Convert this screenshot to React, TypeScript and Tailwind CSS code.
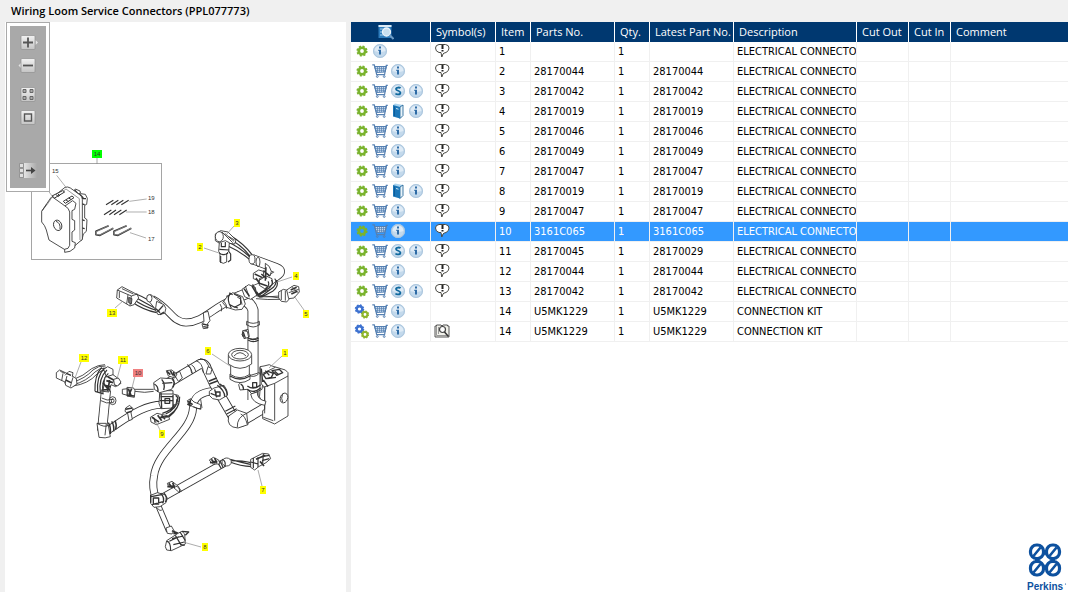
import React, { useState } from "react";

type IconName = "gear" | "gears" | "cart" | "info" | "super" | "book";

type Part = {
  item: string;
  partNo: string;
  latest: string;
  description: string;
  icons: IconName[];
  symbol: "note" | "manual" | null;
};

const CONNECTOR = "ELECTRICAL CONNECTO";

const parts: Part[] = [
  { item: "1", partNo: "", latest: "", description: CONNECTOR, icons: ["gear", "info"], symbol: "note" },
  { item: "2", partNo: "28170044", latest: "28170044", description: CONNECTOR, icons: ["gear", "cart", "info"], symbol: "note" },
  { item: "3", partNo: "28170042", latest: "28170042", description: CONNECTOR, icons: ["gear", "cart", "super", "info"], symbol: "note" },
  { item: "4", partNo: "28170019", latest: "28170019", description: CONNECTOR, icons: ["gear", "cart", "book", "info"], symbol: "note" },
  { item: "5", partNo: "28170046", latest: "28170046", description: CONNECTOR, icons: ["gear", "cart", "info"], symbol: "note" },
  { item: "6", partNo: "28170049", latest: "28170049", description: CONNECTOR, icons: ["gear", "cart", "info"], symbol: "note" },
  { item: "7", partNo: "28170047", latest: "28170047", description: CONNECTOR, icons: ["gear", "cart", "info"], symbol: "note" },
  { item: "8", partNo: "28170019", latest: "28170019", description: CONNECTOR, icons: ["gear", "cart", "book", "info"], symbol: "note" },
  { item: "9", partNo: "28170047", latest: "28170047", description: CONNECTOR, icons: ["gear", "cart", "info"], symbol: "note" },
  { item: "10", partNo: "3161C065", latest: "3161C065", description: CONNECTOR, icons: ["gear", "cart", "info"], symbol: "note" },
  { item: "11", partNo: "28170045", latest: "28170029", description: CONNECTOR, icons: ["gear", "cart", "super", "info"], symbol: "note" },
  { item: "12", partNo: "28170044", latest: "28170044", description: CONNECTOR, icons: ["gear", "cart", "info"], symbol: "note" },
  { item: "13", partNo: "28170042", latest: "28170042", description: CONNECTOR, icons: ["gear", "cart", "super", "info"], symbol: "note" },
  { item: "14", partNo: "U5MK1229", latest: "U5MK1229", description: "CONNECTION KIT", icons: ["gears", "cart", "info"], symbol: null },
  { item: "14", partNo: "U5MK1229", latest: "U5MK1229", description: "CONNECTION KIT", icons: ["gears", "cart", "info"], symbol: "manual" },
];

const iconLabels: Record<IconName, string> = {
  gear: "Part",
  gears: "Kit",
  cart: "Add to cart",
  info: "Information",
  super: "Supersession",
  book: "Service document",
};

const Gear = ({ cx, cy, r, color }: { cx: number; cy: number; r: number; color: string }) => (
  <g>
    <circle cx={cx} cy={cy} r={r * 0.6} fill="none" stroke={color} strokeWidth={r * 0.5} />
    <circle
      cx={cx}
      cy={cy}
      r={r * 0.88}
      fill="none"
      stroke={color}
      strokeWidth={r * 0.3}
      strokeDasharray={`${r * 0.38} ${r * 0.311}`}
    />
  </g>
);

const Disc = ({ children }: { children: React.ReactNode }) => (
  <g>
    <circle cx="8" cy="8" r="7" fill="#c3d9ec" />
    <circle cx="8" cy="8" r="6.400" fill="none" stroke="#a9c4dc" />
    <path d="M2.500 8a5.500 5.500 0 0 1 11 0q-5.500 2-11 0" fill="#dfebf6" />
    {children}
  </g>
);

const RowIcon = ({ name }: { name: IconName }) => (
  <svg viewBox="0 0 16 16" className="w-4 h-4">
    {name === "gear" && <Gear cx={8} cy={8} r={5.4} color="#7ab32e" />}
    {name === "gears" && (
      <>
        <Gear cx={5.5} cy={6} r={4.6} color="#3e72d0" />
        <Gear cx={11} cy={11.5} r={4} color="#8fb52a" />
      </>
    )}
    {name === "cart" && (
      <g fill="none" stroke="#5580b2">
        <path d="M2.500 3.500h12l-1.500 5.500-8.500.5z" fill="#d3e2f2" />
        <path d="M.3 1.800h2L4.800 12M15.800 2.300h-1.500L12.500 12M4.500 11.700h8.500" strokeWidth="1.200" />
        <path d="M3 5.400h11M3.500 7.300h10M5.500 3.500v5.500M7.500 3.500v5.500M9.500 3.500v5.500M11.500 3.500v5.500" strokeWidth=".7" />
        <circle cx="5.300" cy="13.500" r=".9" />
        <circle cx="12.200" cy="13.500" r=".9" />
      </g>
    )}
    {name === "info" && (
      <Disc>
        <path d="M7 3.600h2v1.800H7zM6.300 6.800H9v4.600H7V8h-.7z" fill="#2f6ca6" />
      </Disc>
    )}
    {name === "super" && (
      <Disc>
        <path
          d="M10.500 5.300C9.800 4.300 6 4 6 6c0 2 4.400 1.500 4.400 3.700 0 2.300-4 2-4.900.8"
          fill="none"
          stroke="#11699e"
          strokeWidth="1.800"
        />
      </Disc>
    )}
    {name === "book" && (
      <g>
        <path d="M3 2 5 .5l8 1.500v10.500l-2.500 2.500z" fill="#a9d3ee" />
        <path d="M10 4 13 2v10.500L10 15.500z" fill="#e8f3fa" stroke="#155a90" strokeWidth=".8" />
        <path d="M3 2 10 4v11.500L3 13.500z" fill="#1c77b8" />
        <path d="M4.500 3.500v9.500" stroke="#0d5690" strokeWidth=".8" />
        <path d="M6 5.500l2.500.7" stroke="#cfe8f7" />
      </g>
    )}
  </svg>
);

const SymbolIcon = ({ name }: { name: "note" | "manual" }) =>
  name === "note" ? (
    <svg viewBox="0 0 16 16" className="w-4 h-4">
      <path
        d="M5 1.500h6.500Q15 2 15 5q0 3-3 4.500-2.500.5-3 1.500L7.800 14 7 9.500H5Q1.500 8.500 1.500 5 1.500 2 5 1.500z"
        fill="#fff"
        stroke="#4a4a44"
        strokeLinejoin="round"
      />
      <path d="M8.500 2v4M8.500 7v1.500" stroke="#222" strokeWidth="2" />
    </svg>
  ) : (
    <svg viewBox="0 0 16 16" className="w-4 h-4">
      <path d="M1 3h1.500V2H7l1 1 1-1h4.500v1H15v11H1z" fill="#f1f1ea" stroke="#555" />
      <path d="M2.500 3v9.500H14M4.500 4v7" stroke="#999" fill="none" />
      <circle cx="8.500" cy="6.500" r="3" fill="#fff" stroke="#444" strokeWidth="1.200" />
      <path d="m10.500 9 4 4.500" stroke="#333" strokeWidth="1.500" />
    </svg>
  );

const tools = [
  { name: "Zoom in", css: "mt-[9px]" },
  { name: "Zoom out", css: "mt-2" },
  { name: "Fit to window", css: "mt-[14px]" },
  { name: "Actual size", css: "mt-2" },
  { name: "Show list", css: "mt-[38px]" },
];

const ToolIcon = ({ name }: { name: string }) => (
  <svg viewBox="0 0 20 15" className="w-5 h-[15px]">
    <defs>
      <linearGradient id="tool" x1="0" y1="0" x2="0" y2="1">
        <stop offset="0" stopColor="#f2f2f2" />
        <stop offset="1" stopColor="#c4c4c4" />
      </linearGradient>
      <linearGradient id="fade">
        <stop offset="0" stopColor="#e4e4e4" />
        <stop offset="1" stopColor="#a9a9a9" />
      </linearGradient>
    </defs>
    {name === "Show list" ? (
      <g>
        <path d="M6 0h13v15H6z" fill="url(#fade)" />
        <path d="M1.500.5h4v4h-4zM1.500 5.500h4v4h-4zM1.500 10.500h4v4h-4z" fill="#e0e0e0" stroke="#888" strokeWidth=".8" />
        <path d="M8 7.500h6" stroke="#444" strokeWidth="1.600" />
        <path d="m13 4 4.500 3.500L13 11z" fill="#444" />
      </g>
    ) : (
      <g>
        {name === "Zoom in" && <path d="m17.500 5 2.500 2.500-2.500 2.500z" fill="#e4e4e4" />}
        {name === "Zoom out" && <path d="M3 5 .5 7.500 3 10z" fill="#e4e4e4" />}
        <rect x="3" y=".5" width="14" height="14" rx="1" fill="url(#tool)" stroke="#8f8f8f" strokeWidth=".7" />
      </g>
    )}
    {name === "Zoom in" && <path d="M5 7.500h10m-5-5v10" stroke="#555" strokeWidth="1.800" />}
    {name === "Zoom out" && <path d="M5 7.500h10" stroke="#555" strokeWidth="1.800" />}
    {name === "Fit to window" && (
      <path
        d="M5 2.500h3v3H5zM12 2.500h3v3h-3zM5 9.500h3v3H5zM12 9.500h3v3h-3z"
        fill="#aaa"
        stroke="#666"
      />
    )}
    {name === "Actual size" && <rect x="6.500" y="4" width="7" height="7" fill="none" stroke="#555" strokeWidth="1.400" />}
  </svg>
);

// hollow tube: dark stroke with a white one on top
const Pipe = ({ d, w }: { d: string; w: number }) => (
  <g fill="none" strokeLinejoin="round">
    <path d={d} stroke="#333" strokeWidth={w} />
    <path d={d} stroke="#fff" strokeWidth={w - 1.7} />
  </g>
);

const labels = [
  { n: "3", x: 237, y: 223, line: "M234 226 226 235" },
  { n: "2", x: 200, y: 247, line: "M204 248 219 253" },
  { n: "4", x: 296, y: 276, line: "M292 277 277 282" },
  { n: "5", x: 306, y: 314, line: "M304 310 294 296" },
  { n: "13", x: 112, y: 313, line: "M115 308 123 301" },
  { n: "6", x: 208, y: 351, line: "M212 354 230 366" },
  { n: "1", x: 285, y: 353, line: "M282 356 269 368" },
  { n: "12", x: 84, y: 358, line: "M81 362 75 378" },
  { n: "11", x: 123, y: 360, line: "M121 364 117 379" },
  { n: "10", x: 138, y: 373, line: "M135 376 132 388", fill: "#f08080" },
  { n: "9", x: 162, y: 434, line: "M160 430 155 420" },
  { n: "7", x: 263, y: 490, line: "M262 486 258 470" },
  { n: "8", x: 205, y: 547, line: "M201 547 183 542" },
  { n: "14", x: 97, y: 154, line: "M97 158V164", fill: "#00ff00" },
];

const LoomDrawing = () => (
  <svg
    viewBox="5 22 341 570"
    className="w-full"
    role="img"
    aria-label="Wiring loom exploded view"
    fontFamily='"Liberation Sans", Arial, sans-serif'
  >
    <rect x="31.500" y="163.500" width="130" height="96" fill="none" stroke="#a5a5a5" />

    {/* connector housing and pins */}
    <g transform="translate(30 140) scale(.33333)" fill="#fff" stroke="#333" strokeWidth="2.600" strokeLinejoin="round">
      <path d="M128 157l8-10 14 6 2 8 14 2 6 12-2 18-6 3v38l7 5-2 35-9 8-4 18-14 6z" />
      <path d="M134 150l12 14M146 160l14 14M150 176h18M150 190l14 4M146 236l18 6M148 262l16 4" strokeWidth="4" />
      <path d="M68 172 105 142q8-3 16 2l28 20q8 6 8 14v120l-28 24-20-10z" />
      <path d="M78 170 108 147 148 176 150 300" fill="none" strokeWidth="1.500" />
      <path d="M105 198 128 182 138 190 134 208l-8 4v26l8 4v28l-8 6v28l10 4-2 16-14 10-16 3z" />
      <path d="M62 174 35 214v32q10 10 14 24l8 30 46 28q14 0 16-12V216q-2-12-14-18L66 170z" />
      <path d="M50 192 35 214M66 172 54 190 38 210" fill="none" strokeWidth="1.500" />
      <path d="M66 168 98 152l6 4-30 18zM100 184l26-16 6 5-26 17zM84 162l6 6M78 164l8 6M108 180l8 5M116 174l8 5" strokeWidth="3" />
      <ellipse cx="83" cy="256" rx="12" ry="16" transform="rotate(-20 83 256)" />
      <path d="M78 244q14 4 12 24" fill="none" />
      <path
        d="M228 194 250 181M244 194 265 181M259 194 280 181M274 194 296 181M222 224 244 210M238 224 258 210M252 224 274 210M268 224 290 210"
        strokeWidth="3.500"
      />
      <path
        d="M236 257 198 274v10l12 2 40-21M290 257 252 274v10l12 2 40-21"
        fill="none"
        strokeWidth="5"
      />
      <path d="M236 257 199 275v8l11 2 40-21M290 257 253 275v8l11 2 40-21" fill="none" stroke="#ccc" strokeWidth="1.500" />
      <path d="M80 106 108 142M46 140 66 168M298 184 350 177M288 216H350M300 278 348 294" stroke="#888" strokeWidth="2" />
    </g>
    <g fontSize="6" fill="#333">
      <text x="52" y="173">15</text>
      <text x="148" y="200">19</text>
      <text x="148" y="214">18</text>
      <text x="148" y="241">17</text>
    </g>

    {/* tubes */}
    <Pipe d="M214 391C200 392 193 398 193 408 192 432 157 450 154 476 152 486 154 492 156 500" w={8} />
    <Pipe d="M160 499 224 463" w={8} />
    <Pipe d="M158 505 169 531" w={6} />
    <Pipe d="M106 390 102 431" w={10} />
    <Pipe d="M108 430C124 420 144 403 165 405" w={8} />
    <Pipe d="M163 386 200 364Q205 363 207 369L214 384 232 415Q237 427 246 419L268 406" w={10} />
    <Pipe d="M253 400V320 310Q250 300 236 297" w={11} />
    <Pipe d="M152 299C170 308 172 322 186 322.500 204 322 212 308 232 300" w={8} />
    <Pipe d="M252 259 276 268Q284 271 276 276L266 283" w={10} />
    <Pipe d="M228 301 268 285" w={11} />

    {/* upper loom: connectors 2, 3, 4, 5 and 13 */}
    <g transform="translate(100 210) scale(.33333)" fill="#fff" stroke="#333" strokeWidth="2.600" strokeLinejoin="round">
      <path d="M380 84Q420 100 450 138M384 96Q420 112 450 142M384 108Q420 124 448 148M390 76Q430 100 456 134" fill="none" strokeWidth="3.500" />
      <path d="M346 72l16-10 22 4 24 24-4 12-16-2-20 6-22-14z" />
      <ellipse cx="358" cy="80" rx="12" ry="15" />
      <path d="M366 66 398 98M374 70 402 94M386 80 404 90" />
      <path d="M358 98 376 92l12 6-2 26-6 6v26q-10 8-20 0v-26l-4-6z" />
      <path d="M358 130q12 8 26 0M364 98v12h12V96M362 138v20M386 124l6 8v18l-8 6M358 118l30 2" fill="none" strokeWidth="3.500" />
      <ellipse cx="456" cy="148" rx="9" ry="14" />
      <ellipse cx="474" cy="156" rx="6" ry="14" fill="none" />
      <path d="M496 160q14 6 18 24l-4 14-14-8z" />
      <path d="M460 190l16-10 14 4 2 18-16 10-16-6zM478 206l20-8 18 8 2 18-24 12-16-10z" />
      <path d="M464 192 486 202M490 182l20 16M498 172l-2 40M468 204l10 16 24 8M484 192l16 14" fill="none" strokeWidth="4.500" />
      <path d="M524 206q10 10-4 26l-40 30M514 210q8 8-4 22l-36 26M530 210q8 18-12 34l-34 18M504 214q8 10-10 26l-26 18" fill="none" strokeWidth="3.500" />
      <path d="M426 238l20-14 20 8 4 24-18 12-18-8zM436 228l12 34M458 222l14 30" />
      <path d="M432 236 448 258M456 228l14 24M470 246l10 16" strokeWidth="4.500" />
      <path d="M468 266Q500 270 546 268M472 260Q500 262 540 258M480 256 540 264" fill="none" />
      <path d="M536 246l14-8 16 4 6 20-12 14-16-2-8-10z" />
      <path d="M560 240l22-14 14 4 2 16-16 18-16 2zM576 230l18 18M566 248l30-10M544 242v28M556 242v30" />
      <path d="M572 240 590 232M574 252 592 244" strokeWidth="5" />
      <path d="M380 262 398 248l30 12 8 22-10 16-20 2-26-8-12-14z" />
      <path d="M390 250q-12 20 4 44M402 252l20 10v20l-18 10-14-8M388 248l10 6M400 290l14 4" fill="none" strokeWidth="3.500" />
      <path d="M360 282q8 10 4 22M372 274q10 12 8 22M412 262q12 2 14 22" fill="none" />
      <path d="M440 334q20 12 38 0M440 344q20 14 38 0M440 334v12M478 334v12M442 382q16 10 32 0" fill="none" />
      <path d="M430 362l14-4 4 22-14 4-8-10z" />
      <path d="M430 364l-2 16M438 360v22" strokeWidth="4" />
      <path d="M310 308l14-4 6 28-8 10 2 12-14 2-4-14 6-8z" />
      <path d="M308 342l18 4M310 350l14 2" strokeWidth="4" />
      {/* 13 */}
      <path d="M100 258Q130 276 176 300M100 268Q130 290 172 302M96 276Q130 300 170 308M108 252Q140 264 180 294" fill="none" strokeWidth="3.500" />
      <path d="M52 240 66 230l46 24 4 10-14 20-12 4-40-24z" />
      <path d="M52 240 94 258l18-6M94 258l-4 28M84 254l-4 28M66 236l34 16M58 244v20" fill="none" />
      <path d="M86 262l10 4-2 16-8-4z" fill="#777" />
      <path d="M144 256q10-6 16 4l24 18-14 24-28-34z" />
      <ellipse cx="148" cy="265" rx="8" ry="11" />
      <path d="M170 274l22 10q10 10 2 26l-20 4-8-14z" />
      <path d="M172 306l18-20M180 314l12-8M168 296l12 12" strokeWidth="4" />
    </g>

    {/* left loom: connectors 9 to 12 */}
    <g transform="translate(45 330) scale(.33333)" fill="#fff" stroke="#333" strokeWidth="2.600" strokeLinejoin="round">
      <path d="M84 156Q120 146 144 120 160 106 182 108M86 164Q124 154 150 126 164 112 184 114M84 168Q130 162 156 132 170 118 186 120M82 150Q116 138 140 116 160 104 180 104" fill="none" />
      <path d="M34 128l10-8 38 18 12 8 2 16-18 12-16-8-2-10-26-12z" />
      <path d="M60 136l12-12 12 4-2 12M54 130l-4 22M66 138l-6 22M84 142l-8 28M46 124l14 6" />
      <path d="M64 130l14 6M62 150l16 8" strokeWidth="4.500" />
      <path d="M176 118l12-8 16 8v20l-20 2z" />
      <path d="M170 112Q148 136 150 184M178 114Q154 140 158 186M186 120Q160 144 166 190M190 130Q168 150 174 192M150 184l26 8" fill="none" strokeWidth="3.500" />
      <path d="M180 142l24-8 16 12 8 14-16 10-14-6-6 22-18-2z" />
      <path d="M184 152l20 6M188 140l18 10M178 166l20 4M172 180l24-2M194 150l-6 34M206 148l6 20M174 158l14 18" strokeWidth="5" />
      <path d="M206 148l14-4 8 12-10 12-10-4z" />
      <ellipse cx="203" cy="212" rx="10" ry="12" />
      <ellipse cx="203" cy="212" rx="4" ry="6" />
      <path d="M170 204q16 10 34 4M168 212q16 10 34 6" fill="none" />
      <path d="M156 280q24 14 34 6l6 34q-14 6-34 2z" />
      <path d="M156 280h28l-4 36" fill="none" />
      <path d="M190 278q8 12 6 34M200 274q8 12 6 30M210 272q6 12 2 26" fill="none" strokeWidth="4.500" />
      <path d="M242 234l12-8 10 10-6 12 4 20-10 4-4-22-8-6z" />
      <path d="M242 238l20-4M246 248l14-4" strokeWidth="4.500" />
      {/* 10 */}
      <path d="M270 178H326M270 184Q300 190 326 184" fill="none" />
      <path d="M232 178l16-2v20l-16-4zM246 172l20 2 4 8-2 20-22-4z" />
      <path d="M250 176l8 20M252 194l8-18M246 196l22 2" strokeWidth="5" />
      {/* tee */}
      <path d="M344 182h40v24h-40z" />
      <path d="M326 158l20-14 34 2 8 12-8 20-36 10-16-10z" />
      <path d="M328 162q14 8 10 24M350 148q12 14 6 32M382 144q10 14 2 28M352 160l30-2" fill="none" strokeWidth="4" />
      <path d="M364 122l16-2 16 12-6 12-20-6z" />
      <path d="M366 124l10 10M376 122l8 14M386 126l2 14" strokeWidth="5" />
      <path d="M344 192h40l16 4 4 14-16 24-40 2-6-16z" />
      <path d="M346 200h38M344 212h40M384 194v36M392 196q12 8 2 22M348 188l2 46M360 206h14v14h-14z" fill="none" strokeWidth="4" />
      <path d="M404 200Q406 234 370 258M396 206Q396 236 362 252M388 222Q384 240 352 250M402 220Q392 250 360 268" fill="none" strokeWidth="3.500" />
      <path d="M316 262l20-12 34 8 4 10-40 16-16-8z" />
      <path d="M326 266l16 10M338 256l12 16M350 256l10 12M320 262q12 2 10 16M346 262l24-2" strokeWidth="5" />
      <path d="M388 134l16-10 8 20-12 10zM426 104q10 0 14 26" fill="none" />
    </g>

    {/* filter, elbow and control box: 1 and 6 */}
    <g transform="translate(180 330) scale(.33333)" fill="#fff" stroke="#333" strokeWidth="2.600" strokeLinejoin="round">
      <path d="M24 108q10 4 14 24M34 104q10 4 14 22M60 86q22 0 30 36M48 92q20 6 22 36" fill="none" />
      <path d="M84 110l12 6-4 16-14 0z" />
      <path d="M86 154l24-10M88 162l26-10" strokeWidth="5" />
      <path d="M88 184l14-10 30-8 8 14 2 16-24 14-20-4-10-10z" />
      <path d="M92 190l20 8M104 178l6 24M120 162q22 14 22 34M112 166q22 16 22 34M108 186h12v12h-12z" fill="none" strokeWidth="4" />
      <path d="M136 244l30-16M140 252l30-16M144 260l30-16" strokeWidth="3.500" />
      <path d="M146 258q-8 34 28 36l30-10-4-34-28-10z" />
      <path d="M172 292q-2-30 28-42M182 252q14 6 20 32" fill="none" />
      <path d="M22 212l10-6 10 10 20 8 0 14-24-8-12-8z" />
      <path d="M24 214l14 10M32 208l-4 18M22 222l12 6" strokeWidth="5" />
      <path d="M40 230q12 8 24 6M62 208l4 26" fill="none" />
      {/* vertical tube fittings */}
      <path d="M188 2l14 2 4 18-14 4z" />
      <path d="M190 6l6 18M204 24q16 10 32 0M204 30q16 10 32 0" fill="none" strokeWidth="3.500" />
      <path d="M198 140l40-12 12 20-4 30-30 14-14-14-22 2-4-16z" />
      <path d="M182 162q10 6 8 18M202 168q20 14 40-4M202 178q18 14 40-4M218 158h12v14h-12z" fill="none" strokeWidth="4" />
      <path d="M206 136q16 8 30-4" fill="none" />
      {/* control box */}
      <path d="M240 110l12-2 16-4 8 4 40 12 8 8v130l-40 24-36-16 0-24 6-4V172l-10-10z" />
      <path d="M250 172l34-12 40-22M284 160V272M254 172V250M248 130 286 112M250 262l30 10M240 112v70q-6 20 6 34" fill="none" />
      <path d="M250 134l14-10 16 6-6 12-16 4zM276 122l22-4 10 10-18 8zM262 146l26-4M244 116l4 40M256 122l12 14M284 124l12 10M250 150l14 20" strokeWidth="4" />
      <ellipse cx="312" cy="204" rx="11" ry="15" transform="rotate(20 312 204)" />
      <path d="M308 192q-6 14 0 24" fill="none" />
      <path d="M212 192q4 28 42 34l4-12q-28-6-26-28z" />
      {/* filter */}
      <path d="M150 132v16q30 20 60 0v-16z" />
      <path d="M150 138q30 18 60 0" fill="none" strokeWidth="4" />
      <path d="M152 104v30q28 18 56 0v-30z" />
      <path d="M145 76v26q35 26 70 0V76z" />
      <ellipse cx="180" cy="74" rx="35" ry="19" />
      <ellipse cx="180" cy="74" rx="25" ry="13" />
      <path d="M162 78q18-20 36 0" fill="none" />
    </g>

    {/* lower loom: connectors 7 and 8 */}
    <g transform="translate(130 430) scale(.33333)" fill="#fff" stroke="#333" strokeWidth="2.600" strokeLinejoin="round">
      <path d="M300 88Q330 96 364 104M300 96Q330 108 366 110M304 92Q340 92 362 98" fill="none" strokeWidth="3.500" />
      <path d="M362 88l16-8 20-10 18 2 6 14-14 12-22 12-12 10-12-8z" />
      <path d="M370 84v30M384 82v30M362 96l22 6M394 80l24-4M396 92l22-6M400 72l-2 28" strokeWidth="3.500" />
      <path d="M390 94l12 14M378 88l28-12" strokeWidth="5" />
      <ellipse cx="290" cy="96" rx="14" ry="12" />
      <path d="M270 92l10 22M262 96l12 20M276 88q14 6 8 22" fill="none" strokeWidth="3.500" />
      <path d="M238 90l12-8 16 8 4 12-22 0z" />
      <path d="M244 88l10 12M254 84l6 16M240 98l22-4" strokeWidth="5" />
      <path d="M112 160l14-6 18 14 10 16-8 2-16-14-14-2z" />
      <path d="M116 160l12 14M128 158l6 16M112 170l22-2" strokeWidth="5" />
      <path d="M134 168q18 2 14 20" fill="none" />
      <path d="M62 196l20-8 22 6 8 10-4 14-18 12-18 2-10-12z" />
      <path d="M64 200l30-6M66 224l36-10M92 190q14 14 6 30M102 190q12 12 4 26M70 204h16v18h-16zM62 194v24" fill="none" strokeWidth="4" />
      <path d="M82 234q8 12 16 4" />
      <path d="M108 294l16-6 8 14-6 10-14-2z" />
      <path d="M126 302l18 8M130 310l20 2" strokeWidth="5" />
      <path d="M110 332l34-22 12-6 8 8 2 30-12 6-30 14-14-2-4-10z" />
      <path d="M110 334q12 0 12 28M126 326l34-8M130 344l34-8M136 316l18 30M150 306l16 26M118 334l28-14" fill="none" strokeWidth="3.500" />
      <path d="M156 304l20 2-10 10M152 344l12 2" fill="none" strokeWidth="4" />
    </g>

    {labels.map(({ n, x, y, line, fill }) => (
      <g key={n}>
        <path d={line} stroke="#888" strokeWidth=".7" />
        <rect
          x={n.length > 1 ? x - 5 : x - 3}
          y={y - 4}
          width={n.length > 1 ? 10 : 6}
          height="8"
          fill={fill ?? "#ffff00"}
        />
        <text x={x} y={y + 2} fontSize="6" textAnchor="middle" fill="#333">
          {n}
        </text>
      </g>
    ))}
  </svg>
);

const PerkinsLogo = () => (
  <svg viewBox="0 0 41 50" className="w-[41px] h-[50px]" role="img" aria-label="Perkins">
    <g fill="none" stroke="#0d519f" strokeWidth="3.200">
      <rect x="3.500" y="3" width="13" height="13.500" rx="6" />
      <rect x="19.500" y="3" width="13" height="13.500" rx="6" />
      <rect x="3.500" y="19.500" width="13" height="13.500" rx="6" />
      <rect x="19.500" y="19.500" width="13" height="13.500" rx="6" />
      <path d="M6.500 14 13.500 5.500M22.500 14 29.500 5.500M6.500 30.500 13.500 22M22.500 30.500 29.500 22" strokeWidth="2.600" />
    </g>
    <path d="M16 8h4v3l-2 2.500-2-2.500zM16 28h4v-3l-2-2.500-2 2.500zM8 16v4h3l2.500-2-2.500-2zM28 16v4h-3l-2.500-2 2.500-2z" fill="#0d519f" />
    <text
      x="0"
      y="48"
      fontSize="10"
      fontWeight="bold"
      fontFamily='"Liberation Sans", Arial, sans-serif'
      fill="#0d519f"
    >
      Perkins
    </text>
    <circle cx="38.500" cy="42" r=".6" fill="#0d519f" />
  </svg>
);

const columns = [
  { title: "Symbol(s)", css: "w-[65px]" },
  { title: "Item", css: "w-[35px]" },
  { title: "Parts No.", css: "w-[84px]" },
  { title: "Qty.", css: "w-[35px]" },
  { title: "Latest Part No.", css: "w-[84px]" },
  { title: "Description", css: "w-[123px]" },
  { title: "Cut Out", css: "w-[52px]" },
  { title: "Cut In", css: "w-[42px]" },
  { title: "Comment", css: "" },
];

const cell = "h-5 p-0 pl-[3px] border-r border-b border-[#f0f0f0] overflow-hidden";

const App: React.FC = () => {
  const [selected, setSelected] = useState(9);

  return (
    <div className="min-h-screen flex flex-col bg-[#f0f0f0] font-['Open_Sans','Noto_Sans',sans-serif] text-[11px] leading-4 text-black">
      <h1 className="h-[22px] pl-[11px] pt-[3px] font-semibold">Wiring Loom Service Connectors (PPL077773)</h1>
      <main className="flex-1 flex gap-[5px] pl-[5px]">
        <section className="relative w-[341px] shrink-0 bg-white">
          <LoomDrawing />
          <div className="absolute left-px top-0 w-[44px] h-[170px] p-[3px] bg-white border border-[#aaa]">
            <div className="h-full bg-[#a9a9a9] flex flex-col items-center">
              {tools.map(({ name, css }) => (
                <button key={name} aria-label={name} className={`block ${css}`}>
                  <ToolIcon name={name} />
                </button>
              ))}
            </div>
          </div>
        </section>

        <section className="flex-1 min-w-0 bg-white flex flex-col">
          <table className="w-full table-fixed border-separate border-spacing-0 whitespace-nowrap text-left">
            <thead className="bg-[#003870] text-white">
              <tr>
                <th className="w-20 h-5 p-0 pl-[27px] border-r border-white">
                  <button aria-label="Search parts" className="block">
                    <svg viewBox="0 0 16 16" className="w-4 h-4">
                      <path d="M.5 1h13v13H.5z" fill="#2f7dbd" />
                      <path d="M.5 1h13v2H.5z" fill="#dbeaf6" />
                      <path d="M2 5h3M2 8h2M2 11h3" stroke="#a9d3ef" />
                      <circle cx="8.500" cy="8" r="4" fill="#c8dff0" stroke="#eef5fb" strokeWidth="1.300" />
                      <path d="m11.500 11 4 4" stroke="#6d9cc6" strokeWidth="2" />
                    </svg>
                  </button>
                </th>
                {columns.map(({ title, css }) => (
                  <th key={title} className={`h-5 p-0 pl-[5px] font-normal border-r border-white last:border-r-0 ${css}`}>
                    {title}
                  </th>
                ))}
              </tr>
            </thead>
            <tbody className="font-['DejaVu_Sans_Condensed','Open_Sans',sans-serif]">
              {parts.map((part, i) => (
                <tr
                  key={i}
                  onClick={() => setSelected(i)}
                  className={i === selected ? "bg-[#3399ff] text-white" : "bg-white"}
                >
                  <td className="h-5 p-0 pl-[2px] pb-[2px] border-r border-b border-[#f0f0f0]">
                    <div className="flex">
                      {part.icons.map((icon) => (
                        <button key={icon} aria-label={iconLabels[icon]} className="w-[18px] flex justify-center">
                          <RowIcon name={icon} />
                        </button>
                      ))}
                    </div>
                  </td>
                  <td className="h-5 p-0 pl-[3px] pb-[2px] border-r border-b border-[#f0f0f0]">
                    {part.symbol && <SymbolIcon name={part.symbol} />}
                  </td>
                  <td className={cell}>{part.item}</td>
                  <td className={cell}>{part.partNo}</td>
                  <td className={cell}>1</td>
                  <td className={cell}>{part.latest}</td>
                  <td className={cell}>{part.description}</td>
                  <td className={cell}></td>
                  <td className={cell}></td>
                  <td className="h-5 p-0 border-b border-[#f0f0f0]"></td>
                </tr>
              ))}
            </tbody>
          </table>
          <footer className="mt-auto self-end">
            <PerkinsLogo />
          </footer>
        </section>
      </main>
    </div>
  );
};
export default App;
